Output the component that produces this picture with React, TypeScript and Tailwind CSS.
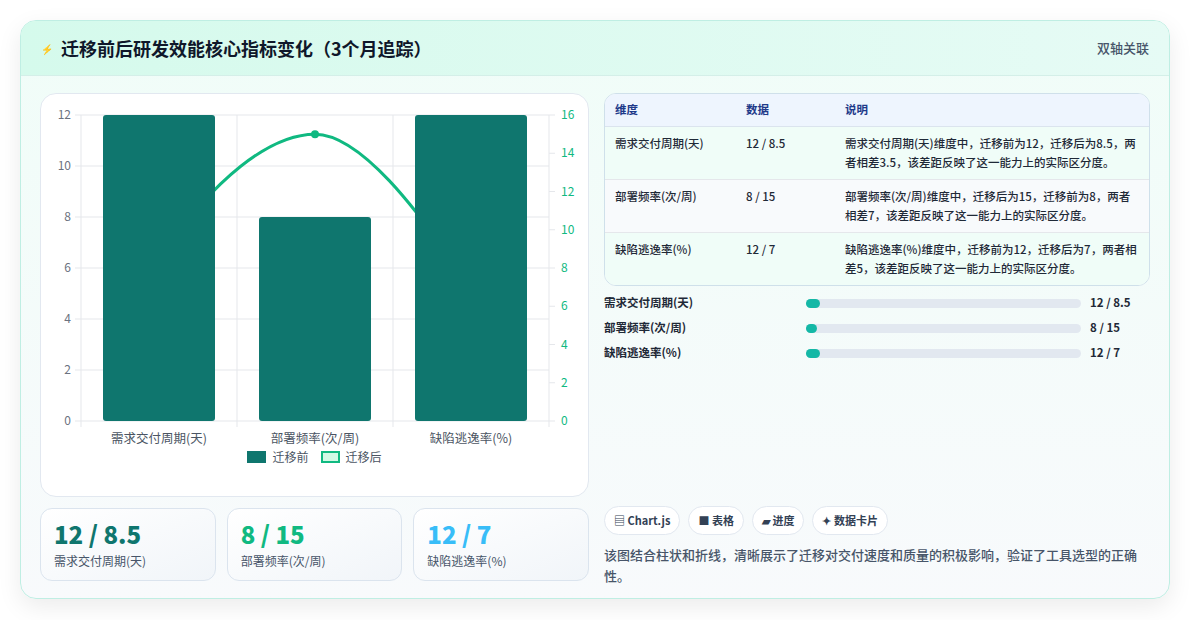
const F = { fontFamily: '"Noto Sans CJK SC", "Noto Sans", sans-serif' };

const rows = [
  { name: "需求交付周期(天)", before: 12, after: 8.5, data: "12 / 8.5", desc: "需求交付周期(天)维度中，迁移前为12，迁移后为8.5，两者相差3.5，该差距反映了这一能力上的实际区分度。", pct: 3 },
  { name: "部署频率(次/周)", before: 8, after: 15, data: "8 / 15", desc: "部署频率(次/周)维度中，迁移后为15，迁移前为8，两者相差7，该差距反映了这一能力上的实际区分度。", pct: 2 },
  { name: "缺陷逃逸率(%)", before: 12, after: 7, data: "12 / 7", desc: "缺陷逃逸率(%)维度中，迁移前为12，迁移后为7，两者相差5，该差距反映了这一能力上的实际区分度。", pct: 3 },
];

function Chart() {
  const L = 40, R = 508, T = 21, B = 327;
  const h = B - T;
  const cw = (R - L) / 3;
  const yl = (v: number) => B - (v / 12) * h;
  const yr = (v: number) => B - (v / 16) * h;
  const cx = (i: number) => L + cw * i + cw / 2;
  const p = rows.map((r, i) => [cx(i), yr(r.after)]);
  const line = `M${p[0][0]},${p[0][1]} C${p[0][0] + 55},${p[0][1] - 80} ${p[1][0] - 45},${p[1][1]} ${p[1][0]},${p[1][1]} C${p[1][0] + 45},${p[1][1]} ${p[2][0] - 55},${p[2][1] - 80} ${p[2][0]},${p[2][1]}`;
  return (
    <svg width="548" height="360" className="block">
      {[0, 2, 4, 6, 8, 10, 12].map((v) => (
        <g key={v}>
          <line x1={L - 6} x2={R} y1={yl(v)} y2={yl(v)} stroke="#e5e7eb" />
          <text x={L - 10} y={yl(v) + 4} textAnchor="end" fontSize="12" fill="#6b7280">{v}</text>
        </g>
      ))}
      {[0, 2, 4, 6, 8, 10, 12, 14, 16].map((v) => (
        <g key={v}>
          <line x1={R} x2={R + 6} y1={yr(v)} y2={yr(v)} stroke="#e5e7eb" />
          <text x={R + 12} y={yr(v) + 4} fontSize="12" fill="#10b981">{v}</text>
        </g>
      ))}
      {[0, 1, 2, 3].map((i) => (
        <line key={i} x1={L + cw * i} x2={L + cw * i} y1={T} y2={B + 6} stroke="#e5e7eb" />
      ))}
      <path d={line} fill="none" stroke="#10b981" strokeWidth="3" />
      <circle cx={p[1][0]} cy={p[1][1]} r="4" fill="#10b981" />
      {rows.map((r, i) => (
        <g key={i}>
          <rect x={cx(i) - 56} y={yl(r.before)} width="112" height={B - yl(r.before)} rx="3" fill="#0f766e" />
          <text x={cx(i)} y={B + 22} textAnchor="middle" fontSize="12.5" fill="#4b5563">{r.name}</text>
        </g>
      ))}
    </svg>
  );
}

export default function App() {
  return (
    <div className="w-[1192px] h-[620px] bg-white p-5 pr-[22px]" style={F}>
      <div className="h-[579px] rounded-2xl border border-[#bfeee3] bg-gradient-to-b from-[#f0fdf8] to-[#f8fafc] shadow-[0_8px_24px_rgba(0,0,0,0.08)] overflow-hidden">
        <div className="h-[55px] flex items-center justify-between px-5 bg-gradient-to-r from-[#d5faec] to-[#e6fbf5] border-b border-[#d4efe8]">
          <div className="flex items-center gap-2">
            <span className="text-[10px] text-[#3b82f6]">⚡</span>
            <span className="text-[18px] font-bold text-[#0f172a]">迁移前后研发效能核心指标变化（3个月追踪）</span>
          </div>
          <span className="text-[13px] text-[#475569] font-medium">双轴关联</span>
        </div>
        <div className="flex gap-[15px] px-[19px] pt-[17px]">
          <div className="w-[549px] flex flex-col gap-[11px]">
            <div className="h-[404px] rounded-2xl bg-white border border-[#e2e8f0] overflow-hidden">
              <Chart />
              <div className="flex justify-center gap-3 text-[12px] text-[#4b5563] -mt-[6px]">
                <span className="flex items-center gap-1.5"><span className="w-[19px] h-[12px] bg-[#0f766e]" />迁移前</span>
                <span className="flex items-center gap-1.5"><span className="w-[19px] h-[12px] bg-[#d1fae5] border-2 border-[#10b981]" />迁移后</span>
              </div>
            </div>
            <div className="grid grid-cols-3 gap-[11px]">
              {rows.map((r, i) => (
                <div key={i} className="h-[73px] rounded-xl bg-gradient-to-br from-white to-[#f1f5f9] border border-[#dbe4ee] px-[13px] pt-[10px]">
                  <div className={`text-[24px] font-extrabold leading-[30px] ${i === 0 ? "text-[#0f766e]" : i === 1 ? "text-[#10b981]" : "text-[#38bdf8]"}`}>{r.data}</div>
                  <div className="text-[12px] text-[#475569] mt-[3px]">{r.name}</div>
                </div>
              ))}
            </div>
          </div>
          <div className="flex-1 pr-[-1px]">
            <div className="rounded-xl border border-[#cfe0ea] overflow-hidden bg-white text-[11.5px]">
              <div className="flex h-[33px] items-center bg-[#eef5fe] text-[#1e3a8a] font-semibold border-b border-[#dbe4ee]">
                <span className="w-[141px] pl-[10px]">维度</span>
                <span className="w-[99px]">数据</span>
                <span>说明</span>
              </div>
              {rows.map((r, i) => (
                <div key={i} className={`flex py-[7px] text-[#1f2937] font-medium leading-[19px] ${i < 2 ? "border-b border-[#e5e7eb]" : ""} ${i === 1 ? "bg-[#f8fafc]" : "bg-[#f0fdf8]"}`}>
                  <span className="w-[141px] pl-[10px]">{r.name}</span>
                  <span className="w-[99px]">{r.data}</span>
                  <span className="flex-1 pr-2">{r.desc}</span>
                </div>
              ))}
            </div>
            <div className="mt-[8px] flex flex-col gap-[7px]">
              {rows.map((r, i) => (
                <div key={i} className="flex items-center h-[18px] text-[11.5px] font-semibold text-[#1f2937]">
                  <span className="w-[202px]">{r.name}</span>
                  <div className="w-[275px] h-[9px] rounded-full bg-[#e2e8f0]">
                    <div className="h-full rounded-full bg-[#14b8a6]" style={{ width: `${r.pct + 2}%` }} />
                  </div>
                  <span className="ml-[9px]">{r.data}</span>
                </div>
              ))}
            </div>
            <div className="mt-[144px] flex gap-[8px] text-[11px] font-semibold text-[#334155]">
              {["▤ Chart.js", "■ 表格", "▰ 进度", "✦ 数据卡片"].map((t) => (
                <span key={t} className="h-[29px] px-[9px] flex items-center rounded-full border border-[#e2e8f0] bg-white">{t}</span>
              ))}
            </div>
            <p className="mt-[9px] text-[13px] leading-[21px] text-[#475569] font-medium pr-[10px]">该图结合柱状和折线，清晰展示了迁移对交付速度和质量的积极影响，验证了工具选型的正确性。</p>
          </div>
        </div>
      </div>
    </div>
  );
}
